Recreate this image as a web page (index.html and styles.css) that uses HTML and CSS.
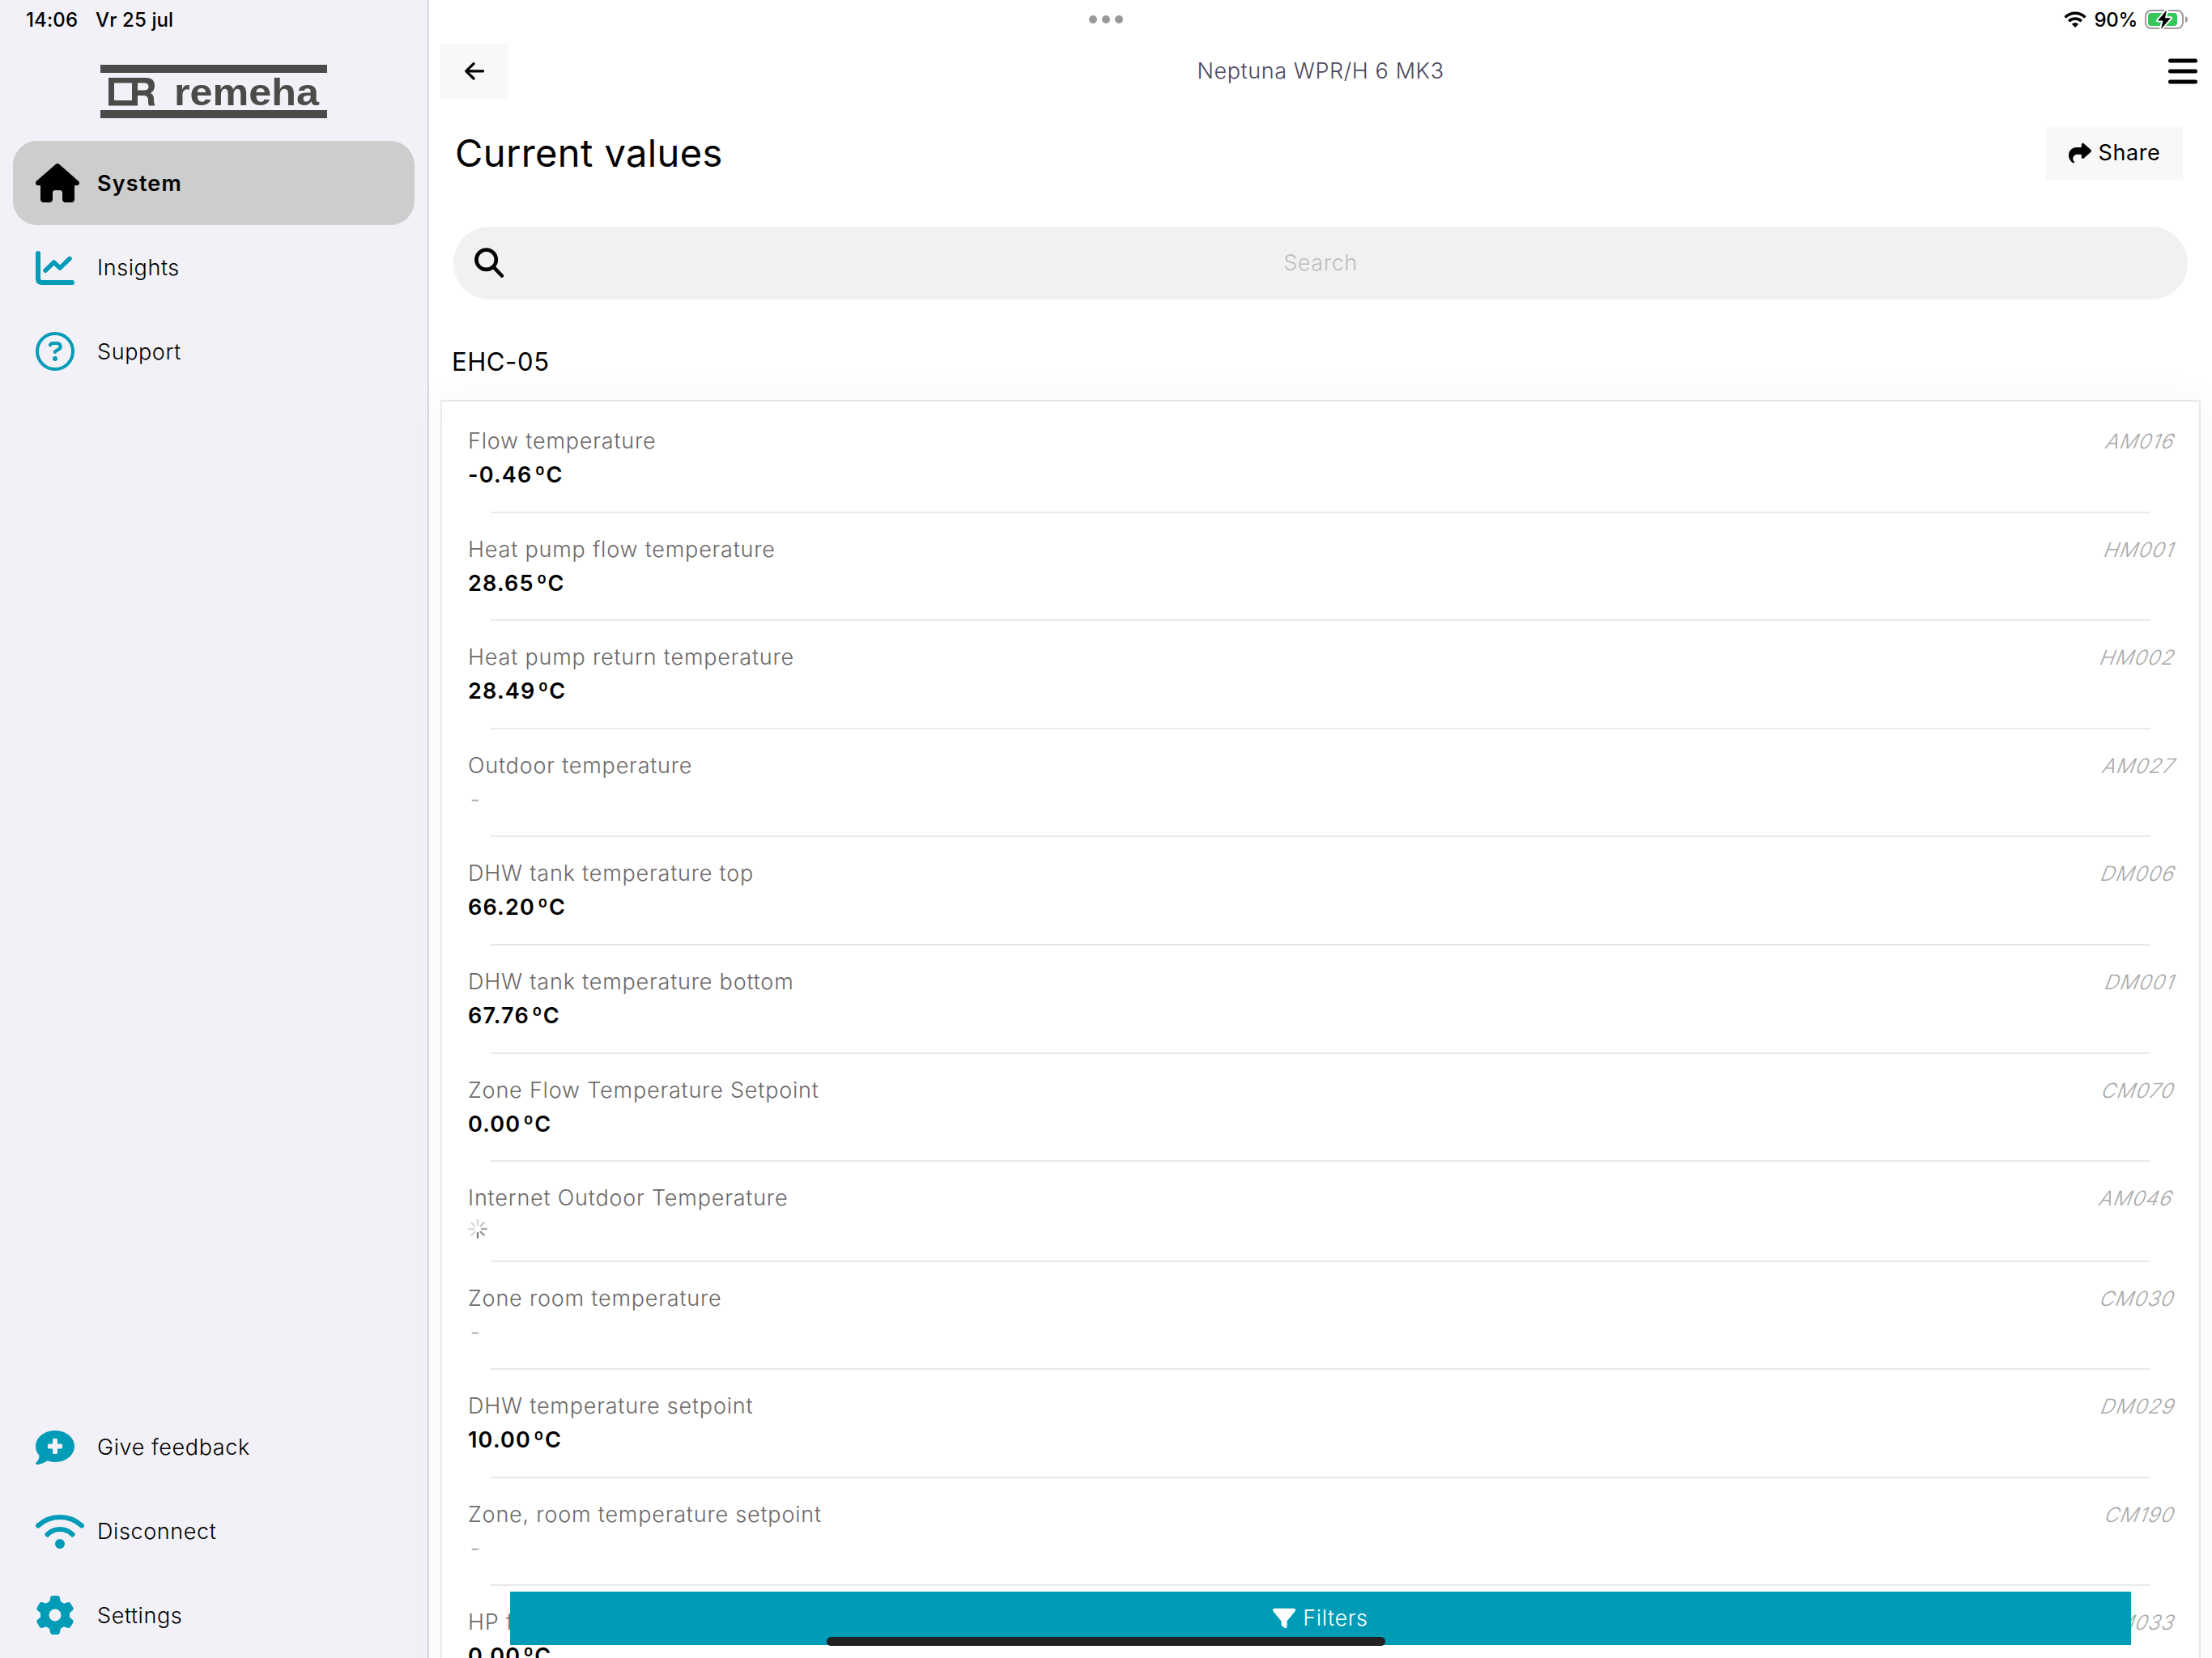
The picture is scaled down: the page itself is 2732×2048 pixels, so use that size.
FILE: index.html
```html
<!DOCTYPE html>
<html lang="en">
<head>
    <meta charset="UTF-8">
    <meta name="viewport" content="width=device-width, initial-scale=1.0">
    <title>Current values</title>
    <link rel="stylesheet" href="styles.css">
</head>
<body>
    <div class="app">
        <aside class="sidebar">
            <div class="status-left">
                <span class="time">14:06</span>
                <span class="date">Vr 25 jul</span>
            </div>
            <svg class="logo" viewBox="0 0 280 66" role="img">
                <rect width="280" height="10"/>
                <rect y="56" width="280" height="10"/>
                <path class="logo-mark" fill-rule="evenodd" d="M10 16H56Q67 16 67 26Q67 32 62 35Q66 37 66 42Q66 48 67.500 50.500H60Q59 49 59 44Q59 38 54 38H46V50.500H10ZM17 22.500V44H39V22.500ZM46 22.500V31.500H54Q59.500 31.500 59.500 27T54 22.500Z"/>
                <text x="91" y="50.200" textLength="179" lengthAdjust="spacingAndGlyphs">remeha</text>
            </svg>
            <nav class="menu">
                <a class="menu-item active">
                    <span class="menu-icon"><svg width="54" height="48" viewBox="0 0 576 512"><path d="M575.8 255.5c0 18-15 32.1-32 32.1h-32l.7 160.2c0 2.700-.2 5.400-.5 8.100V472c0 22.100-17.900 40-40 40H392c-22.100 0-40-17.900-40-40V384c0-17.700-14.300-32-32-32H256c-17.700 0-32 14.300-32 32v88c0 22.100-17.900 40-40 40H104c-22.100 0-40-17.900-40-40V287.600H32c-18 0-32-14-32-32.100c0-9 3-17 10-24L266.400 8c7-7 15-8 22-8s15 2 21 7L564.800 231.500c8 7 12 15 11 24z"/></svg></span>
                    <span>System</span>
                </a>
                <a class="menu-item">
                    <span class="menu-icon"><svg class="line" width="48" height="48" viewBox="0 0 48 48"><path stroke-width="6" d="M3 7V38Q3 43 8 43H45"/><path stroke-width="5.500" d="M12 28.200L22.500 18L30 25L42 13.500"/></svg></span>
                    <span>Insights</span>
                </a>
                <a class="menu-item">
                    <span class="menu-icon"><svg class="line" width="48" height="48" viewBox="0 0 48 48"><circle cx="24" cy="24" r="22" stroke-width="4"/><path stroke-width="4.200" d="M18 16Q19 14 21.500 14H26.500A4 4 0 0 1 28.500 21.500L24 24.300V25"/><circle class="dot" cx="24" cy="33" r="3"/></svg></span>
                    <span>Support</span>
                </a>
            </nav>
            <nav class="menu menu-bottom">
                <a class="menu-item">
                    <span class="menu-icon"><svg width="48" height="48" viewBox="0 0 48 48"><path fill-rule="evenodd" d="M24 4C37.300 4 48 12.700 48 23.500S37.300 43 24 43Q18.500 43 14.500 41.300Q8 46 1.200 46Q-.8 45.500 .5 43.800Q4.500 40 4.500 35Q0 30 0 23.500C0 12.700 10.700 4 24 4ZM21 15V20.500H16.500Q14.800 20.500 14.800 23.500T16.500 26.500H21V31.500Q21 33 24 33T27 31.500V26.500H31.500Q33.200 26.500 33.200 23.500T31.500 20.500H27V15Q27 13.800 24 13.800T21 15Z"/></svg></span>
                    <span>Give feedback</span>
                </a>
                <a class="menu-item">
                    <span class="menu-icon"><svg class="line" width="60" height="48" viewBox="0 0 60 48"><path stroke-width="6" d="M3 17.500A40 40 0 0 1 57 17.500M14.500 28.500A22 22 0 0 1 45.500 28.500"/><circle class="dot" cx="30" cy="40" r="6"/></svg></span>
                    <span>Disconnect</span>
                </a>
                <a class="menu-item">
                    <span class="menu-icon"><svg width="48" height="48" viewBox="0 0 512 512"><path d="M495.9 166.6c3.2 8.7 .5 18.4-6.4 24.6l-43.3 39.4c1.1 8.3 1.7 16.8 1.7 25.4s-.6 17.1-1.7 25.4l43.3 39.4c6.9 6.2 9.6 15.9 6.4 24.6c-4.4 11.9-9.7 23.3-15.8 34.3l-4.7 8.1c-6.6 11-14 21.4-22.1 31.2c-5.9 7.2-15.7 9.6-24.5 6.8l-55.7-17.7c-13.4 10.3-28.2 18.9-44 25.4l-12.5 57.1c-2 9.1-9 16.3-18.2 17.8c-13.8 2.3-28 3.5-42.5 3.5s-28.7-1.2-42.5-3.5c-9.2-1.5-16.2-8.7-18.2-17.8l-12.5-57.1c-15.8-6.5-30.6-15.1-44-25.4L83.1 425.9c-8.8 2.8-18.6 .3-24.5-6.8c-8.1-9.8-15.5-20.2-22.1-31.2l-4.7-8.1c-6.1-11-11.4-22.4-15.8-34.3c-3.2-8.7-.5-18.4 6.4-24.6l43.3-39.4C64.6 273.1 64 264.6 64 256s.6-17.1 1.7-25.4L22.4 191.2c-6.9-6.2-9.6-15.9-6.4-24.6c4.4-11.9 9.7-23.3 15.8-34.3l4.7-8.1c6.6-11 14-21.4 22.1-31.2c5.9-7.2 15.7-9.6 24.5-6.8l55.7 17.7c13.4-10.3 28.2-18.9 44-25.4l12.5-57.1c2-9.1 9-16.3 18.2-17.8C227.3 1.2 241.5 0 256 0s28.7 1.2 42.500 3.500c9.200 1.500 16.200 8.700 18.200 17.800l12.500 57.100c15.800 6.500 30.600 15.100 44 25.400l55.700-17.700c8.800-2.800 18.600-.3 24.500 6.800c8.100 9.800 15.500 20.200 22.100 31.200l4.700 8.100c6.100 11 11.400 22.400 15.800 34.300zM256 336a80 80 0 1 0 0-160 80 80 0 1 0 0 160z"/></svg></span>
                    <span>Settings</span>
                </a>
            </nav>
        </aside>

        <main class="content">
            <div class="status-bar">
                <span></span>
                <svg width="42" height="10" viewBox="0 0 42 10" fill="#999"><circle cx="5" cy="5" r="5"/><circle cx="21" cy="5" r="5"/><circle cx="37" cy="5" r="5"/></svg>
                <div class="status-right">
                    <svg width="28" height="20" viewBox="0 0 28 20"><path fill="none" stroke="#000" stroke-width="3.600" d="M1.600 7.400A17.500 17.500 0 0 1 26.400 7.400M6.200 12.200A11 11 0 0 1 21.800 12.200"/><path d="M14 20L9.800 15.800Q14 12.400 18.200 15.800Z"/></svg>
                    <span class="percent">90%</span>
                    <svg width="53" height="26" viewBox="0 0 53 26"><rect x="1" y="2" width="46" height="22" rx="7" fill="none" stroke="#9c9c9c" stroke-width="2"/><path fill="#9c9c9c" d="M50 9Q53 10 53 13T50 17Z"/><rect x="4" y="5" width="36" height="16" rx="4" fill="#34c759"/><path stroke="#fff" stroke-width="4" stroke-linejoin="round" paint-order="stroke" d="M27 1.500L16 14.500H22.500L20 25L32 11.200H25Z"/></svg>
                </div>
            </div>
            <header class="topbar">
                <button class="back"><svg width="24" height="22" viewBox="0 0 24 22"><path d="M11 1.700L1.700 10.800L11 20M2 10.800H22.500"/></svg></button>
                <span class="device">Neptuna WPR/H 6 MK3</span>
                <svg class="burger" width="36" height="32" viewBox="0 0 36 32"><path d="M2.500 3H33.500M2.500 16H33.500M2.500 29H33.500"/></svg>
            </header>
            <div class="title-row">
                <h1>Current values</h1>
                <button class="share"><svg width="28" height="28" viewBox="0 0 512 512"><path d="M307 34.8c-11.5 5.1-19 16.6-19 29.2v64H176C78.8 128 0 206.8 0 304C0 417.3 81.5 467.9 100.2 478.1c2.5 1.4 5.3 1.9 8.1 1.9c10.9 0 19.7-8.9 19.7-19.7c0-7.5-4.3-14.4-9.8-19.5C108.8 431.9 96 414.4 96 384c0-53 43-96 96-96h96v64c0 12.6 7.4 24.1 19 29.2s25 3 34.4-5.4l160-144c6.7-6.1 10.6-14.7 10.6-23.8s-3.8-17.7-10.6-23.8l-160-144c-9.4-8.5-22.9-10.6-34.4-5.4z"/></svg><span>Share</span></button>
            </div>
            <div class="search">
                <svg width="36" height="37" viewBox="0 0 36 37"><circle cx="14.600" cy="14.700" r="12.200"/><path d="M23.500 23.800L33.800 34.500"/></svg>
                <span>Search</span>
            </div>
            <h2>EHC-05</h2>
            <section class="card">
                <div class="row">
                    <div><p class="label">Flow temperature</p><p class="value">-0.46<span>ºC</span></p></div>
                    <span class="code">AM016</span>
                </div>
                <div class="row">
                    <div><p class="label">Heat pump flow temperature</p><p class="value">28.65<span>ºC</span></p></div>
                    <span class="code">HM001</span>
                </div>
                <div class="row">
                    <div><p class="label">Heat pump return temperature</p><p class="value">28.49<span>ºC</span></p></div>
                    <span class="code">HM002</span>
                </div>
                <div class="row">
                    <div><p class="label">Outdoor temperature</p><p class="empty">-</p></div>
                    <span class="code">AM027</span>
                </div>
                <div class="row">
                    <div><p class="label">DHW tank temperature top</p><p class="value">66.20<span>ºC</span></p></div>
                    <span class="code">DM006</span>
                </div>
                <div class="row">
                    <div><p class="label">DHW tank temperature bottom</p><p class="value">67.76<span>ºC</span></p></div>
                    <span class="code">DM001</span>
                </div>
                <div class="row">
                    <div><p class="label">Zone Flow Temperature Setpoint</p><p class="value">0.00<span>ºC</span></p></div>
                    <span class="code">CM070</span>
                </div>
                <div class="row loading">
                    <div>
                        <p class="label">Internet Outdoor Temperature</p>
                        <svg class="spinner" width="24" height="24" viewBox="0 0 24 24"><path stroke="#d9d9d9" d="M12 1.200V7M4.400 4.400L8.400 8.400M1.200 12H7M4.400 19.600L8.400 15.600"/><path stroke="#c6c6c8" d="M19.600 4.400L15.600 8.400"/><path stroke="#aeaeb2" d="M17 12H22.800"/><path stroke="#98989c" d="M15.600 15.600L19.600 19.600"/><path stroke="#858589" d="M12 17V22.800"/></svg>
                    </div>
                    <span class="code">AM046</span>
                </div>
                <div class="row">
                    <div><p class="label">Zone room temperature</p><p class="empty">-</p></div>
                    <span class="code">CM030</span>
                </div>
                <div class="row">
                    <div><p class="label">DHW temperature setpoint</p><p class="value">10.00<span>ºC</span></p></div>
                    <span class="code">DM029</span>
                </div>
                <div class="row">
                    <div><p class="label">Zone, room temperature setpoint</p><p class="empty">-</p></div>
                    <span class="code">CM190</span>
                </div>
                <div class="row">
                    <div><p class="label">HP f</p><p class="value">0.00<span>ºC</span></p></div>
                    <span class="code">M033</span>
                </div>
            </section>
        </main>

        <button class="filters"><svg width="28" height="28" viewBox="0 0 512 512"><path d="M3.900 54.900C10.500 40.900 24.500 32 40 32H472c15.500 0 29.500 8.900 36.100 22.900s4.600 30.500-5.200 42.500L320 320.900V448c0 12.100-6.800 23.200-17.700 28.600s-23.800 4.300-33.500-3l-64-48c-8.100-6-12.800-15.500-12.800-25.600V320.900L9 97.300C-.7 85.400-2.800 68.800 3.900 54.900z"/></svg><span>Filters</span></button>
        <div class="home-indicator"></div>
    </div>
</body>
</html>
```
FILE: styles.css
```css
* {
    margin: 0;
    padding: 0;
    box-sizing: border-box;
}

body {
    font-family: Inter, "Liberation Sans", sans-serif;
    font-size: 27px;
    font-weight: 300;
    letter-spacing: 0.6px;
    color: #000;
    background: #fff;
}

button {
    font: inherit;
    letter-spacing: inherit;
    color: inherit;
    border: none;
    display: flex;
    align-items: center;
    justify-content: center;
}

svg {
    display: block;
    flex: none;
}

.app {
    position: relative;
    display: flex;
    height: 2048px;
    overflow: hidden;
}

/* Sidebar */
.sidebar {
    width: 530px;
    flex: none;
    display: flex;
    flex-direction: column;
    background: #f2f1f7;
    border-right: 2px solid #d8d7db;
}

.status-left {
    display: flex;
    gap: 22px;
    height: 48px;
    padding-left: 32px;
    align-items: center;
    font-size: 24px;
    font-weight: 500;
    letter-spacing: 0.1px;
}

.logo {
    width: 280px;
    height: 66px;
    margin: 32px 0 28px 124px;
    fill: #4b4b49;
}

.logo text {
    font-family: "Liberation Sans", sans-serif;
    font-size: 47px;
    font-weight: bold;
    letter-spacing: 0;
}

.menu {
    padding: 0 16px;
}

.menu-bottom {
    margin-top: auto;
    padding-bottom: 1px;
}

.menu-item {
    display: flex;
    align-items: center;
    height: 104px;
    padding-left: 28px;
    border-radius: 30px;
}

.menu-icon {
    width: 76px;
    fill: #009bb7;
    color: #009bb7;
}

.menu-icon .line {
    fill: none;
    stroke: currentColor;
    stroke-linecap: round;
    stroke-linejoin: round;
}

.menu-icon .dot {
    fill: currentColor;
    stroke: none;
}

.active {
    background: #cdcdcd;
    font-weight: 600;
    letter-spacing: 1.2px;
}

.active .menu-icon {
    fill: #000;
}

/* Content */
.content {
    flex: 1;
    min-width: 0;
    padding: 0 14px;
}

.status-bar {
    display: grid;
    grid-template-columns: 787px auto 1fr;
    align-items: center;
    height: 48px;
    margin-bottom: 6px;
    padding: 0 16px 0 14px;
}

.status-right {
    display: flex;
    align-items: center;
    justify-content: flex-end;
    gap: 9px;
}

.percent {
    font-size: 24px;
    font-weight: 500;
    letter-spacing: -0.3px;
}

.topbar {
    display: grid;
    grid-template-columns: 1fr auto 1fr;
    align-items: center;
    height: 68px;
}

.back {
    width: 84px;
    height: 68px;
    background: #f8f8f8;
}

.back svg,
.burger,
.search svg {
    fill: none;
    stroke: #000;
    stroke-width: 3.2;
    stroke-linecap: round;
    stroke-linejoin: round;
}

.burger {
    justify-self: end;
    margin-right: 4px;
    stroke-width: 5;
}

.device {
    padding-bottom: 2px;
    color: #4b4860;
}

.title-row {
    display: flex;
    align-items: center;
    justify-content: space-between;
    height: 66px;
    margin: 34px 22px 58px 18px;
}

h1 {
    padding-bottom: 2px;
    font-size: 47px;
    font-weight: 400;
    letter-spacing: 0.4px;
}

.share {
    width: 169px;
    height: 66px;
    padding-bottom: 1px;
    gap: 9px;
    font-weight: 400;
    background: #f8f8f8;
}

.search {
    display: grid;
    grid-template-columns: 36px 1fr 36px;
    align-items: center;
    height: 90px;
    margin: 0 16px;
    padding: 0 26px 2px;
    border-radius: 45px;
    background: #f1f1f1;
    color: #bdbdbd;
    text-align: center;
}

.search svg {
    stroke-width: 4.6;
}

h2 {
    margin: 57px 0 27px 14px;
    font-size: 31px;
    line-height: 40px;
    font-weight: 400;
}

.card {
    padding-top: 4px;
    border: 2px solid #e8e8e8;
    background: #fff;
    box-shadow: 0 0 50px rgba(0, 0, 0, 0.04);
}

.row {
    position: relative;
    display: flex;
    justify-content: space-between;
    height: 133.6px;
    padding: 24px 42px 0 32px;
    line-height: 42px;
}

/* inset divider */
.row::after {
    content: "";
    position: absolute;
    left: 60px;
    right: 60px;
    bottom: 0;
    height: 2px;
    background: #e9e9e9;
}

.loading {
    height: 123.4px;
}

.label {
    color: #6d696a;
    letter-spacing: 0.8px;
}

.value {
    font-weight: 600;
    letter-spacing: 1.2px;
}

.value span {
    margin-left: 3px;
}

.code,
.empty {
    color: #a9a9a9;
    font-size: 25px;
    letter-spacing: 1px;
    transform: skewX(-21deg);
}

.empty {
    padding-left: 3px;
    font-size: 27px;
}

.spinner {
    margin-top: 5px;
    fill: none;
    stroke-width: 2.4;
    stroke-linecap: round;
}

/* Overlays at the bottom of the screen */
.filters {
    position: absolute;
    left: 630px;
    right: 100px;
    bottom: 16px;
    height: 66px;
    padding-bottom: 1px;
    gap: 9px;
    background: #009bb7;
    color: #fff;
    fill: #fff;
}

.home-indicator {
    position: absolute;
    left: 1021px;
    bottom: 15px;
    width: 690px;
    height: 11px;
    border-radius: 6px;
    background: #222;
}
```
